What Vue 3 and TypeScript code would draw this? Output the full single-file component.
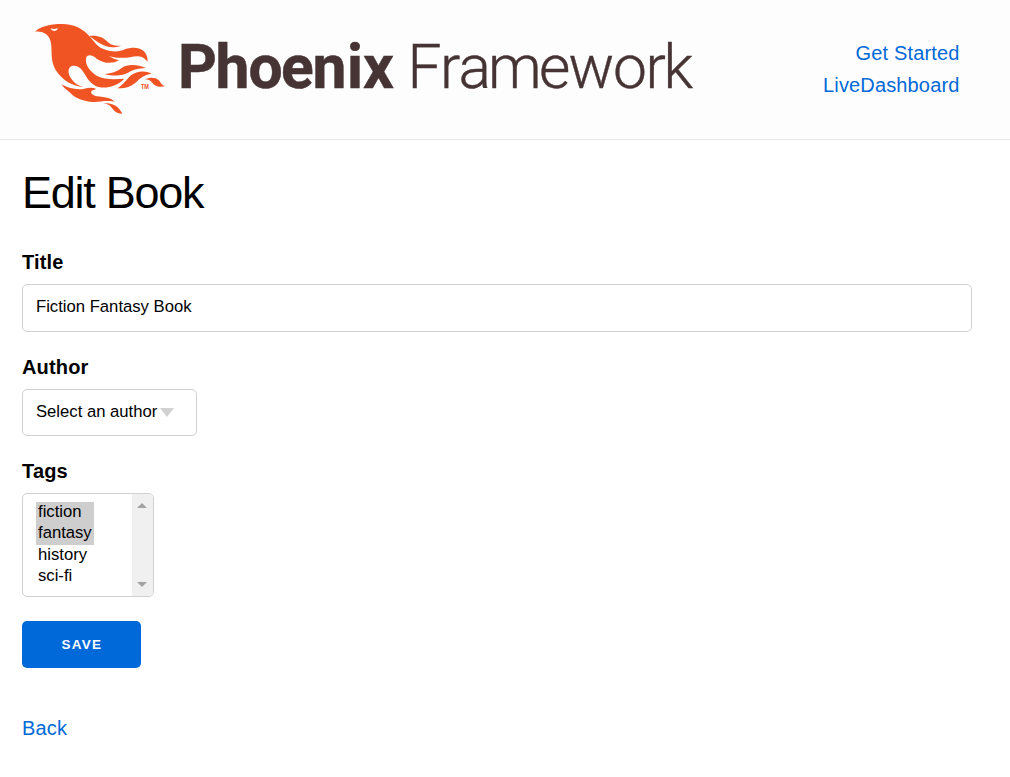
<script setup lang="ts">
import { ref } from 'vue'

interface Tag {
  name: string
  selected: boolean
}

const title = ref('Fiction Fantasy Book')
const links: string[] = ['Get Started', 'LiveDashboard']
const tags = ref<Tag[]>([
  { name: 'fiction', selected: true },
  { name: 'fantasy', selected: true },
  { name: 'history', selected: false },
  { name: 'sci-fi', selected: false },
])
</script>

<template>
  <div class="page">
    <header class="header">
      <svg class="logo" viewBox="0 0 680 120" role="img" aria-label="Phoenix Framework">
        <g transform="translate(3 10) scale(0.33333)" fill="#f05423">
          <path d="M30 65C45 50 75 42 110 42C150 42 175 58 195 80C215 105 245 142 282 151C262 163 235 160 215 146C205 137 187 129 183 145C180 165 195 185 215 197C240 210 270 208 298 206C280 225 250 236 225 232C205 228 192 215 179 192C168 172 155 164 140 168C125 175 130 195 140 208C148 220 160 228 175 231C145 230 110 210 92 180C75 150 82 125 78 100C75 75 55 62 30 65Z" />
          <path d="M193 78C215 74 235 82 245 93C258 106 270 108 288 107C265 115 245 112 228 102C213 95 205 85 193 78Z" />
          <path d="M213 104C240 125 275 130 300 118C330 108 368 113 368 155C350 135 335 138 315 142C290 146 250 143 232 128C224 120 220 112 213 104Z" />
          <path d="M238 192C262 190 275 185 290 174C310 160 340 165 363 174C340 175 325 178 312 187C290 200 262 198 238 192Z" />
          <path d="M277 235C295 225 305 208 318 196C335 183 360 180 380 191C360 195 350 200 338 212C320 230 300 236 277 235Z" />
          <path d="M360 208C375 200 395 202 403 212C410 222 412 226 421 228C405 233 390 230 383 220C378 212 370 208 360 208Z" />
          <path d="M109 223C125 232 150 240 175 237C190 233 203 232 214 237C200 240 194 245 202 253C215 265 250 255 269 275C235 270 225 278 195 275C160 270 145 258 132 245C122 238 115 232 109 223Z" />
          <path d="M236 279C260 278 282 288 292 311C280 312 272 308 264 298C256 286 248 282 236 279Z" />
          <path d="M77 55C84 58 91 57 98 54C98 65 80 67 77 55Z" fill="#fdfdfd" />
          <text class="trademark" x="348" y="236" textLength="24" lengthAdjust="spacingAndGlyphs">TM</text>
        </g>
        <g class="wordmark" fill="#463434">
          <text class="bold" x="156 193.5 226.5 259 290.5 325 341" y="87.5">Phoenix</text>
          <text class="light" x="385.5 418 436.5 466 517 546.5 591 623.5 641.5" y="87.5">Framework</text>
        </g>
      </svg>
      <nav class="nav">
        <a v-for="link in links" :key="link" href="#">{{ link }}</a>
      </nav>
    </header>

    <main class="content">
      <h1>Edit Book</h1>
      <form @submit.prevent>
        <label for="title">Title</label>
        <input id="title" v-model="title" class="field" type="text" />

        <label class="author-label">Author</label>
        <div class="field author">
          <span>Select an author</span>
          <svg width="14" height="9" viewBox="0 0 14 9"><path d="M0 0H14L7 9Z" fill="#d1d1d1" /></svg>
        </div>

        <label class="tags-label">Tags</label>
        <div class="tags">
          <ul>
            <li v-for="tag in tags" :key="tag.name" :class="{ selected: tag.selected }" @click="tag.selected = !tag.selected">{{ tag.name }}</li>
          </ul>
          <div class="scrollbar">
            <svg width="10" height="5" viewBox="0 0 10 5"><path d="M0 5L5 0L10 5Z" fill="#a3a3a3" /></svg>
            <svg width="10" height="5" viewBox="0 0 10 5"><path d="M0 0H10L5 5Z" fill="#a3a3a3" /></svg>
          </div>
        </div>

        <button type="submit">Save</button>
      </form>
      <a class="back" href="#">Back</a>
    </main>
  </div>
</template>

<style>
body {
  margin: 0;
  background: #fff;
}
</style>

<style scoped>
.page {
  height: 777px;
  font-family: "Liberation Sans", Arial, sans-serif;
  font-size: 20px;
  letter-spacing: 0.15px;
  color: #000;
}
.header {
  display: flex;
  justify-content: space-between;
  box-sizing: border-box;
  height: 140px;
  padding: 0 50.5px 0 22px;
  background: #fdfdfd;
  border-bottom: 1px solid #e7e7e7;
}
.logo {
  display: block;
  width: 680px;
  height: 120px;
  overflow: visible;
}
.wordmark {
  font-family: Roboto, sans-serif;
  font-size: 60.5px;
  letter-spacing: 0;
}
.bold {
  font-weight: 700;
  stroke: #463434;
  stroke-width: 0.5px;
}
.light {
  font-weight: 300;
  stroke: #463434;
  stroke-width: 0.4px;
}
.trademark {
  font-size: 19px;
  font-weight: 700;
  letter-spacing: 0;
}
.nav {
  display: flex;
  flex-direction: column;
  align-items: flex-end;
  padding-top: 37px;
  line-height: 32px;
}
a {
  color: #0069d9;
  text-decoration: none;
}
.content {
  padding: 0 38px 0 22px;
}
h1 {
  margin: 0;
  padding-top: 26px;
  font-size: 45px;
  font-weight: 400;
  line-height: 54px;
  letter-spacing: -1.25px;
}
label {
  display: block;
  margin-top: 26px;
  height: 32px;
  line-height: 32px;
  font-weight: 700;
}
.field {
  display: block;
  box-sizing: border-box;
  width: 100%;
  height: 48px;
  margin-top: 6px;
  padding: 0 13px 3px;
  border: 1px solid #d1d1d1;
  border-radius: 5px;
  background: #fff;
  color: #000;
  font: 16.6667px "Liberation Sans", Arial, sans-serif;
  letter-spacing: 0;
  outline: none;
}
.author-label { margin-top: 19px; }
.author {
  display: flex;
  align-items: center;
  gap: 3px;
  width: 175px;
  height: 47px;
  padding-bottom: 1px;
  white-space: nowrap;
}
.author svg { flex: none; margin-top: 1px; }
.tags-label { margin-top: 19px; }
.tags {
  display: flex;
  justify-content: space-between;
  box-sizing: border-box;
  width: 132px;
  height: 104px;
  margin-top: 6px;
  border: 1px solid #d1d1d1;
  border-radius: 5px;
  overflow: hidden;
  font-size: 16.6667px;
  letter-spacing: 0;
}
ul {
  margin: 0;
  padding: 8px 0 0 13px;
  list-style: none;
}
li {
  box-sizing: border-box;
  width: 58px;
  height: 21.5px;
  padding-left: 2px;
  line-height: 20px;
}
li:nth-child(even) { line-height: 18px; }
.selected { background: #cecece; }
.scrollbar {
  display: flex;
  flex-direction: column;
  justify-content: space-between;
  align-items: center;
  box-sizing: border-box;
  width: 21px;
  padding: 9px 1px 9px 0;
  background: #f0f0f0;
}
button {
  display: block;
  width: 119px;
  height: 47px;
  margin-top: 24px;
  padding: 0 0 0 1px;
  border: 0;
  border-radius: 5px;
  background: #0069d9;
  color: #fff;
  font: 700 13.5px "Liberation Sans", Arial, sans-serif;
  letter-spacing: 1.25px;
  text-transform: uppercase;
}
.back {
  display: block;
  width: max-content;
  margin-top: 44px;
  line-height: 32px;
}
</style>
